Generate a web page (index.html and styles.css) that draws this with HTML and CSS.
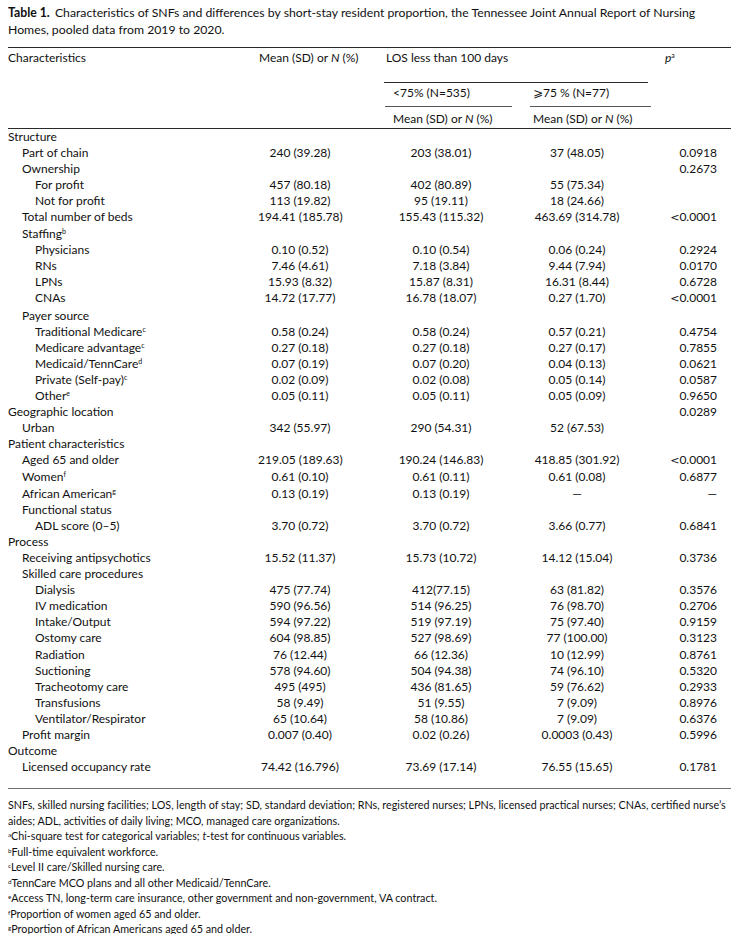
FILE: index.html
```html
<!DOCTYPE html>
<html lang="en">
<head>
<meta charset="utf-8">
<title>Table 1</title>
<link rel="stylesheet" href="styles.css">
</head>
<body>
<div class="page">
  <p class="title"><b>Table 1.</b> Characteristics of SNFs and differences by short-stay resident proportion, the Tennessee Joint Annual Report of Nursing Homes, pooled data from 2019 to 2020.</p>
  <table class="tbl">
    <colgroup><col class="c0"><col class="c1"><col class="c2"><col class="c3"><col class="c4"></colgroup>
    <thead>
      <tr class="h1">
        <th class="lab">Characteristics</th>
        <th class="mh">Mean (SD) or <i>N</i> (%)</th>
        <th colspan="2" class="los"><div class="los-in">LOS less than 100 days</div></th>
        <th class="ph"><i>p</i><sup>a</sup></th>
      </tr>
      <tr class="h2">
        <th></th><th></th>
        <th class="sub2"><div class="sub-in">&lt;75% (N=535)</div></th>
        <th class="sub3"><div class="sub-in">⩾75 % (N=77)</div></th>
        <th></th>
      </tr>
      <tr class="h3">
        <th></th><th></th>
        <th class="m2">Mean (SD) or <i>N</i> (%)</th>
        <th class="m3">Mean (SD) or <i>N</i> (%)</th>
        <th></th>
      </tr>
    </thead>
    <tbody>
      <tr><td class="l0">Structure</td><td></td><td></td><td></td><td></td></tr>
      <tr><td class="l1">Part of chain</td><td>240 (39.28)</td><td>203 (38.01)</td><td>37 (48.05)</td><td>0.0918</td></tr>
      <tr><td class="l1">Ownership</td><td></td><td></td><td></td><td>0.2673</td></tr>
      <tr><td class="l2">For profit</td><td>457 (80.18)</td><td>402 (80.89)</td><td>55 (75.34)</td><td></td></tr>
      <tr><td class="l2">Not for profit</td><td>113 (19.82)</td><td>95 (19.11)</td><td>18 (24.66)</td><td></td></tr>
      <tr><td class="l1">Total number of beds</td><td>194.41 (185.78)</td><td>155.43 (115.32)</td><td>463.69 (314.78)</td><td><span class="lt">&lt;</span>0.0001</td></tr>
      <tr><td class="l1">Staffing<sup>b</sup></td><td></td><td></td><td></td><td></td></tr>
      <tr><td class="l2">Physicians</td><td>0.10 (0.52)</td><td>0.10 (0.54)</td><td>0.06 (0.24)</td><td>0.2924</td></tr>
      <tr><td class="l2">RNs</td><td>7.46 (4.61)</td><td>7.18 (3.84)</td><td>9.44 (7.94)</td><td>0.0170</td></tr>
      <tr><td class="l2">LPNs</td><td>15.93 (8.32)</td><td>15.87 (8.31)</td><td>16.31 (8.44)</td><td>0.6728</td></tr>
      <tr><td class="l2">CNAs</td><td>14.72 (17.77)</td><td>16.78 (18.07)</td><td>0.27 (1.70)</td><td><span class="lt">&lt;</span>0.0001</td></tr>
      <tr><td class="l1">Payer source</td><td></td><td></td><td></td><td></td></tr>
      <tr><td class="l2">Traditional Medicare<sup>c</sup></td><td>0.58 (0.24)</td><td>0.58 (0.24)</td><td>0.57 (0.21)</td><td>0.4754</td></tr>
      <tr><td class="l2">Medicare advantage<sup>c</sup></td><td>0.27 (0.18)</td><td>0.27 (0.18)</td><td>0.27 (0.17)</td><td>0.7855</td></tr>
      <tr><td class="l2">Medicaid/TennCare<sup>d</sup></td><td>0.07 (0.19)</td><td>0.07 (0.20)</td><td>0.04 (0.13)</td><td>0.0621</td></tr>
      <tr><td class="l2">Private (Self-pay)<sup>c</sup></td><td>0.02 (0.09)</td><td>0.02 (0.08)</td><td>0.05 (0.14)</td><td>0.0587</td></tr>
      <tr><td class="l2">Other<sup>e</sup></td><td>0.05 (0.11)</td><td>0.05 (0.11)</td><td>0.05 (0.09)</td><td>0.9650</td></tr>
      <tr><td class="l0">Geographic location</td><td></td><td></td><td></td><td>0.0289</td></tr>
      <tr><td class="l1">Urban</td><td>342 (55.97)</td><td>290 (54.31)</td><td>52 (67.53)</td><td></td></tr>
      <tr><td class="l0">Patient characteristics</td><td></td><td></td><td></td><td></td></tr>
      <tr><td class="l1">Aged 65 and older</td><td>219.05 (189.63)</td><td>190.24 (146.83)</td><td>418.85 (301.92)</td><td><span class="lt">&lt;</span>0.0001</td></tr>
      <tr><td class="l1">Women<sup>f</sup></td><td>0.61 (0.10)</td><td>0.61 (0.11)</td><td>0.61 (0.08)</td><td>0.6877</td></tr>
      <tr><td class="l1">African American<sup>g</sup></td><td>0.13 (0.19)</td><td>0.13 (0.19)</td><td>—</td><td>—</td></tr>
      <tr><td class="l1">Functional status</td><td></td><td></td><td></td><td></td></tr>
      <tr><td class="l2">ADL score (0–5)</td><td>3.70 (0.72)</td><td>3.70 (0.72)</td><td>3.66 (0.77)</td><td>0.6841</td></tr>
      <tr><td class="l0">Process</td><td></td><td></td><td></td><td></td></tr>
      <tr><td class="l1">Receiving antipsychotics</td><td>15.52 (11.37)</td><td>15.73 (10.72)</td><td>14.12 (15.04)</td><td>0.3736</td></tr>
      <tr><td class="l1">Skilled care procedures</td><td></td><td></td><td></td><td></td></tr>
      <tr><td class="l2">Dialysis</td><td>475 (77.74)</td><td>412(77.15)</td><td>63 (81.82)</td><td>0.3576</td></tr>
      <tr><td class="l2">IV medication</td><td>590 (96.56)</td><td>514 (96.25)</td><td>76 (98.70)</td><td>0.2706</td></tr>
      <tr><td class="l2">Intake/Output</td><td>594 (97.22)</td><td>519 (97.19)</td><td>75 (97.40)</td><td>0.9159</td></tr>
      <tr><td class="l2">Ostomy care</td><td>604 (98.85)</td><td>527 (98.69)</td><td>77 (100.00)</td><td>0.3123</td></tr>
      <tr><td class="l2">Radiation</td><td>76 (12.44)</td><td>66 (12.36)</td><td>10 (12.99)</td><td>0.8761</td></tr>
      <tr><td class="l2">Suctioning</td><td>578 (94.60)</td><td>504 (94.38)</td><td>74 (96.10)</td><td>0.5320</td></tr>
      <tr><td class="l2">Tracheotomy care</td><td>495 (495)</td><td>436 (81.65)</td><td>59 (76.62)</td><td>0.2933</td></tr>
      <tr><td class="l2">Transfusions</td><td>58 (9.49)</td><td>51 (9.55)</td><td>7 (9.09)</td><td>0.8976</td></tr>
      <tr><td class="l2">Ventilator/Respirator</td><td>65 (10.64)</td><td>58 (10.86)</td><td>7 (9.09)</td><td>0.6376</td></tr>
      <tr><td class="l1">Profit margin</td><td>0.007 (0.40)</td><td>0.02 (0.26)</td><td>0.0003 (0.43)</td><td>0.5996</td></tr>
      <tr><td class="l0">Outcome</td><td></td><td></td><td></td><td></td></tr>
      <tr class="last"><td class="l1">Licensed occupancy rate</td><td>74.42 (16.796)</td><td>73.69 (17.14)</td><td>76.55 (15.65)</td><td>0.1781</td></tr>
    </tbody>
  </table>
  <div class="notes">
    <p class="note">SNFs, skilled nursing facilities; LOS, length of stay; SD, standard deviation; RNs, registered nurses; LPNs, licensed practical nurses; CNAs, certified nurse’s<br>aides; ADL, activities of daily living; MCO, managed care organizations.</p>
    <p class="note"><sup>a</sup>Chi-square test for categorical variables; <i>t</i>-test for continuous variables.</p>
    <p class="note"><sup>b</sup>Full-time equivalent workforce.</p>
    <p class="note"><sup>c</sup>Level II care/Skilled nursing care.</p>
    <p class="note"><sup>d</sup>TennCare MCO plans and all other Medicaid/TennCare.</p>
    <p class="note"><sup>e</sup>Access TN, long-term care insurance, other government and non-government, VA contract.</p>
    <p class="note"><sup>f</sup>Proportion of women aged 65 and older.</p>
    <p class="note"><sup>g</sup>Proportion of African Americans aged 65 and older.</p>
  </div>
</div>
</body>
</html>
```

FILE: styles.css
```css
html, body {
  margin: 0;
  padding: 0;
  background: #ffffff;
}

body {
  font-family: Lato, "Liberation Sans", "DejaVu Sans", sans-serif;
  font-size: 12px;
  color: #111111;
}

.page {
  padding: 4px 8px 0 8px;
}

.title {
  margin: 0 0 9px 0;
  max-width: 712px;
  font-size: 12.25px;
  line-height: 17px;
}

.title b {
  font-weight: 700;
  margin-right: 2px;
}

sup {
  font-size: 0.58em;
  line-height: 0;
  vertical-align: 0.55em;
}

.tbl {
  width: 100%;
  border-collapse: collapse;
  table-layout: fixed;
}

.c0 { width: 250px; }
.c1 { width: 126px; }
.c2 { width: 136px; }
.c3 { width: 135px; }
.c4 { width: 76px; }

th {
  font-weight: 400;
  text-align: left;
  vertical-align: top;
  padding: 0;
  line-height: 16.2px;
}

.h1 th {
  border-top: 1px solid #2a2a2a;
  padding-top: 2px;
}

.h1 .los {
  padding-top: 0;
}

.los-in {
  padding-top: 2px;
  padding-bottom: 15.3px;
  padding-left: 2px;
  margin-right: 7px;
  border-bottom: 1px solid #2a2a2a;
}

.mh {
  padding-left: 1px;
}

.ph {
  padding-left: 10px;
}

.sub-in {
  padding-top: 2px;
  padding-bottom: 4.8px;
  border-bottom: 1px solid #555555;
}

.sub2 .sub-in {
  padding-left: 8px;
  margin-left: 1px;
  margin-right: 8px;
}

.sub3 .sub-in {
  padding-left: 3px;
  margin-left: 10px;
  margin-right: 4px;
}

.h3 th {
  padding-top: 4px;
  padding-bottom: 0.8px;
  border-bottom: 1px solid #2a2a2a;
}

.h3 .m2 {
  padding-left: 9px;
}

.h3 .m3 {
  padding-left: 13px;
}

td {
  padding: 0;
  height: 16.1px;
  line-height: 16.1px;
  white-space: nowrap;
  vertical-align: top;
}

td:nth-child(2) {
  text-align: center;
  padding-right: 42px;
}

td:nth-child(3) {
  text-align: center;
  padding-right: 22px;
}

td:nth-child(4) {
  text-align: center;
  padding-right: 21px;
}

td:nth-child(5) {
  text-align: right;
  padding-right: 14px;
}

.last td {
  padding-bottom: 13px;
}

.l0 { padding-left: 0; }
.l1 { padding-left: 14px; }
.l2 { padding-left: 27px; }

.lt {
  font-family: "DejaVu Sans", sans-serif;
  font-size: 11px;
}

.notes {
  border-top: 1px solid #6e6e6e;
  padding-top: 8px;
}

.note {
  margin: 0;
  font-size: 10.75px;
  line-height: 15.5px;
  white-space: nowrap;
}
```
